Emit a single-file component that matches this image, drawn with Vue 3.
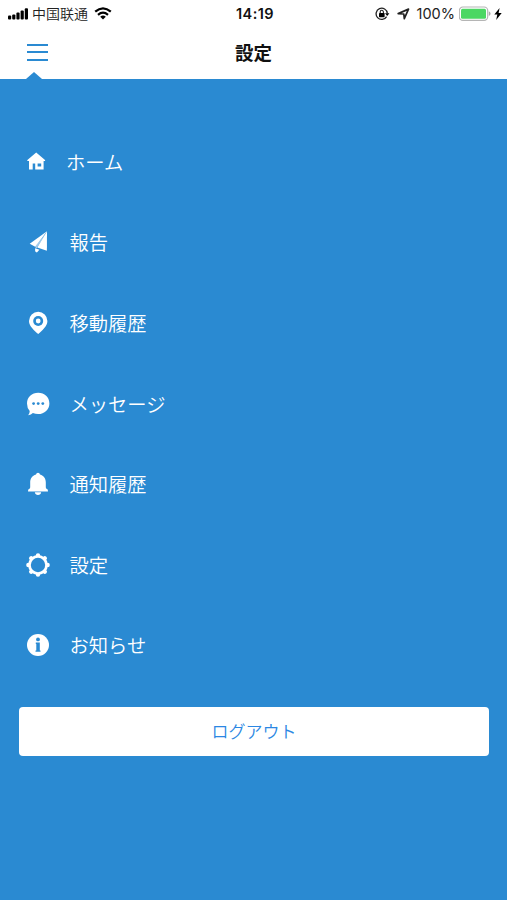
<script setup>
const items = [
  { id: 'home', label: 'ホーム' },
  { id: 'report', label: '報告' },
  { id: 'places', label: '移動履歴' },
  { id: 'messages', label: 'メッセージ' },
  { id: 'alerts', label: '通知履歴' },
  { id: 'settings', label: '設定' },
  { id: 'info', label: 'お知らせ' },
]
const teeth = [0, 45, 90, 135, 180, 225, 270, 315]
</script>

<template>
  <div class="screen">
    <header class="top">
      <div class="status">
        <div class="side left">
          <svg class="signal" width="20" height="12" viewBox="0 0 20 12">
            <rect x="0" y="7.6" width="3.2" height="4" rx="1" />
            <rect x="4.2" y="6.4" width="3.2" height="5.2" rx="1" />
            <rect x="8.4" y="4.6" width="3.2" height="7" rx="1" />
            <rect x="12.6" y="2.4" width="3.2" height="9.2" rx="1" />
            <rect x="16.8" y="0.2" width="3.2" height="11.4" rx="1" />
          </svg>
          <span class="carrier">中国联通</span>
          <svg class="wifi" width="18" height="13" viewBox="0 0 18 13">
            <path d="M1.2 4.7Q9-2.1 16.8 4.7M4 7.8Q9 3.6 14 7.8" fill="none" stroke="#000" stroke-width="2.2" />
            <path d="M6.2 9.7Q9 7.5 11.8 9.7L9 12.5z" />
          </svg>
        </div>
        <span class="time">14:19</span>
        <div class="side right">
          <svg class="lock" width="15" height="14" viewBox="0 0 15 14">
            <path d="M11.6 9.6A5.6 5.6 0 1 1 12.3 6.400" fill="none" stroke="#222" stroke-width="1.3" />
            <path d="M10 6.200h4.400L12.200 9z" />
            <rect x="4" y="6" width="5.600" height="4.200" rx=".6" />
            <path d="M5.200 6V4.900a1.600 1.600 0 0 1 3.200 0V6" fill="none" stroke="#222" stroke-width="1.100" />
          </svg>
          <svg class="arrow" width="13" height="12" viewBox="0 0 13 12">
            <path d="M1.2 5.600L11.500 1.100 7.300 10.700 6.800 6z" fill="none" stroke="#222" stroke-width="1.700" stroke-linejoin="round" />
          </svg>
          <span class="percent">100%</span>
          <svg class="battery" width="33" height="16" viewBox="0 0 33 16">
            <rect x=".3" y="1" width="28.400" height="13.400" rx="3.600" fill="#fff" stroke="#b5b5b5" stroke-width="1.200" />
            <rect x="2" y="2.700" width="25" height="10" rx="1.500" fill="#4bd763" />
            <path d="M29.800 5.300q1.800.9 1.800 2.400t-1.800 2.400z" fill="#a8a8a8" />
          </svg>
          <svg class="bolt" width="8" height="12" viewBox="0 0 8 12">
            <path d="M5.600 0L.3 6.600h3L2.200 12 7.700 5H4.600z" />
          </svg>
        </div>
      </div>
      <div class="nav">
        <button class="burger" aria-label="メニュー"><i></i><i></i><i></i></button>
        <h1>設定</h1>
        <span class="pointer"></span>
      </div>
    </header>

    <nav class="menu">
      <a v-for="item in items" :key="item.id" class="item" :class="item.id">
        <svg class="icon" width="24" height="24" viewBox="0 0 24 24">
          <template v-if="item.id === 'home'">
            <path fill-rule="evenodd" d="M10.200 2.500L19 9.900q.6 1.200-.5 1.200H17.600V19.600H9.200V13.400H6.700V19.600H3V11.100H2q-1.200 0-.6-1.200zM11.600 13.400V16.500H15.200V13.400z" />
          </template>
          <template v-else-if="item.id === 'report'">
            <path d="M21 1.300L3.700 13.700 9.200 16.700z" />
            <path d="M21 1.300L11.300 17.600 20.900 20.800z" />
            <path d="M20.200 3L9.200 16.200 9.900 18.500 11.400 17.200z" opacity=".55" />
            <path d="M9.100 18.200l4.300 1.500-2.500 2.800q-1-.2-1.800-1.200z" />
          </template>
          <template v-else-if="item.id === 'places'">
            <path d="M12.200.8a9.200 9.200 0 0 0-9.200 9.200c0 5.100 5.200 9.500 9.200 13 4-3.500 9.200-7.900 9.200-13A9.200 9.200 0 0 0 12.200.8z" />
            <circle class="hole" cx="12.200" cy="10" r="5" />
            <circle cx="12.200" cy="10" r="2.400" />
          </template>
          <template v-else-if="item.id === 'messages'">
            <path d="M12.200.8c6.300 0 11.200 4.500 11.200 10.600s-4.900 10.600-11.200 10.600q-2.900 0-5.300-1.100-1.800 1.900-4.700 2.300 1.700-2.200 1.500-4.200Q1 15.900 1 11.400C1 5.300 5.900.8 12.200.8z" />
            <circle class="hole" cx="7.600" cy="11.600" r="1.400" />
            <circle class="hole" cx="12.200" cy="11.600" r="1.400" />
            <circle class="hole" cx="16.800" cy="11.600" r="1.400" />
          </template>
          <template v-else-if="item.id === 'alerts'">
            <path d="M12 .7q1.700 0 2 1.800c3.900 1.100 5.800 4.100 5.800 7.900v4.800q0 1.500 1.300 1.900.9.400.9 2.300H2q0-1.900.9-2.300 1.300-.4 1.300-1.900v-4.800c0-3.800 1.900-6.800 5.800-7.900q.3-1.800 2-1.800z" />
            <path d="M8.800 20.300h6.400q-.5 2.700-3.200 2.700t-3.200-2.700z" />
          </template>
          <template v-else-if="item.id === 'settings'">
            <circle cx="12" cy="12" r="9.900" />
            <circle v-for="a in teeth" :key="a" cx="12" cy="2.400" r="2.200" :transform="`rotate(${a} 12 12)`" />
            <circle class="hole" cx="12" cy="12" r="7.200" />
          </template>
          <template v-else>
            <circle cx="12" cy="12" r="11" />
            <circle class="hole" cx="12" cy="6.400" r="1.900" />
            <path class="hole" d="M9.800 9.600h4v7.900h.7v1.300H9.500v-1.300h.8v-6.600h-.5z" />
          </template>
        </svg>
        <span class="label">{{ item.label }}</span>
      </a>
    </nav>

    <button class="logout">ログアウト</button>
  </div>
</template>

<style>
body {
  margin: 0;
}
</style>

<style scoped>
.screen {
  height: 900px;
  overflow: hidden;
  background: #2a8ad2;
  font-family: "Noto Sans CJK JP", sans-serif;
}
svg {
  display: block;
  flex: none;
}
.top {
  height: 79px;
  background: #fff;
}
.status {
  display: grid;
  grid-template-columns: 1fr auto 1fr;
  align-items: center;
  height: 27px;
  padding: 0 5px 0 8px;
  color: #222;
}
.side {
  display: flex;
  align-items: center;
}
.right {
  justify-content: flex-end;
}
.carrier {
  margin: -2px 6px 0 4px;
  font: 350 14px/20px "Noto Sans CJK SC", sans-serif;
}
.time {
  font: 600 14.5px/20px Inter, sans-serif;
  letter-spacing: 0.4px;
  color: #111;
}
.lock {
  margin-right: 7px;
}
.arrow {
  margin-right: 7px;
}
.percent {
  margin-right: 4px;
  font: 400 14.5px/20px Inter, sans-serif;
}
.bolt {
  margin-left: 2px;
}
.nav {
  position: relative;
  display: grid;
  grid-template-columns: 1fr auto 1fr;
  align-items: center;
  height: 52px;
  box-sizing: border-box;
  padding-bottom: 2px;
}
.burger {
  display: flex;
  flex-direction: column;
  gap: 5.5px;
  width: 21px;
  margin-left: 27px;
  padding: 0;
  border: 0;
  background: none;
}
.burger i {
  height: 2px;
  background: #2a8ad2;
}
h1 {
  margin: 0;
  font-size: 18.5px;
  line-height: 28px;
  font-weight: 700;
  color: #111;
}
.pointer {
  position: absolute;
  left: 26px;
  bottom: 0;
  border: solid transparent;
  border-width: 0 8px 7.5px;
  border-bottom-color: #2a8ad2;
}
.menu {
  padding-top: 42.6px;
}
.item {
  display: flex;
  align-items: center;
  gap: 19.5px;
  height: 80.6px;
  padding-left: 26px;
}
.home {
  gap: 16px;
}
.icon {
  fill: #fff;
}
.hole {
  fill: #2a8ad2;
}
.label {
  font-size: 19.3px;
  line-height: 28px;
  font-weight: 350;
  color: #fff;
}
.logout {
  display: block;
  width: 470px;
  height: 49px;
  margin: 21.5px 0 0 19px;
  padding: 0 0 2px;
  border: 0;
  border-radius: 4px;
  background: #fff;
  color: #2b87e3;
  font: 350 17px/28px "Noto Sans CJK JP", sans-serif;
}
</style>
